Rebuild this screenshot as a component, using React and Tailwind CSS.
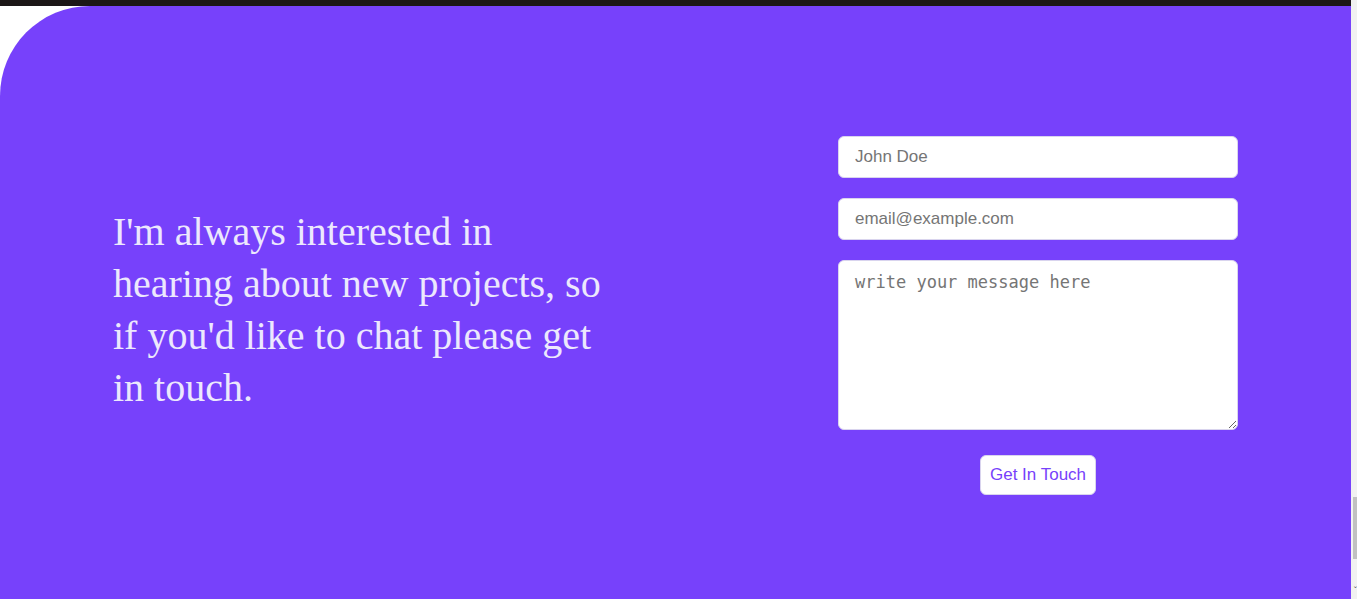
import React from 'react';

function ContactForm() {
  return (
    <form className="flex w-[400px] flex-col gap-5" onSubmit={(e) => e.preventDefault()}>
      <input
        type="text"
        placeholder="John Doe"
        className="h-[42px] w-full rounded-md border border-[#d9d4ee] bg-white px-4 text-[17px] text-gray-800 outline-none placeholder:text-[#757575]"
        style={{ fontFamily: '"Liberation Sans", Arial, sans-serif' }}
      />
      <input
        type="email"
        placeholder="email@example.com"
        className="h-[42px] w-full rounded-md border border-[#d9d4ee] bg-white px-4 text-[17px] text-gray-800 outline-none placeholder:text-[#757575]"
        style={{ fontFamily: '"Liberation Sans", Arial, sans-serif' }}
      />
      <textarea
        placeholder="write your message here"
        className="h-[170px] w-full rounded-md border border-[#d9d4ee] bg-white px-4 pt-[9px] pb-2 font-['DejaVu_Sans_Mono',monospace] text-[17px] leading-6 text-gray-800 outline-none placeholder:text-[#757575]"
      />
      <div className="mt-[5px] flex justify-center">
        <button
          type="submit"
          className="h-10 w-[116px] rounded-md border border-[#d9d4ee] bg-white font-['Liberation_Sans',Arial,sans-serif] text-[17px] text-[#7741fb]"
        >
          Get In Touch
        </button>
      </div>
    </form>
  );
}

export default function App() {
  return (
    <div className="flex h-[599px] w-full overflow-hidden bg-white">
      <div className="flex min-w-0 flex-1 flex-col">
        <div className="h-[6px] w-full shrink-0 bg-[#1c1717]" />
        <section className="flex flex-1 rounded-tl-[90px] bg-[#7741fb] px-[113px] pt-[129px]">
          <div className="flex h-[360px] w-full items-center justify-between">
            <p className="w-[500px] pb-[10px] font-['Liberation_Serif',Georgia,serif] text-[40px] leading-[52px] text-[#ece8fd]">
              I'm always interested in hearing about new projects, so if you'd like to chat please get in touch.
            </p>
            <ContactForm />
          </div>
        </section>
      </div>
      <div className="flex w-[6px] shrink-0 flex-col items-end bg-[#f1f1f1]">
        <div className="mt-[497px] h-[62px] w-[4px] bg-[#c1c1c1]" />
        <div className="mt-[28px] text-[8px] leading-none text-[#505050]">ˇ</div>
      </div>
    </div>
  );
}
